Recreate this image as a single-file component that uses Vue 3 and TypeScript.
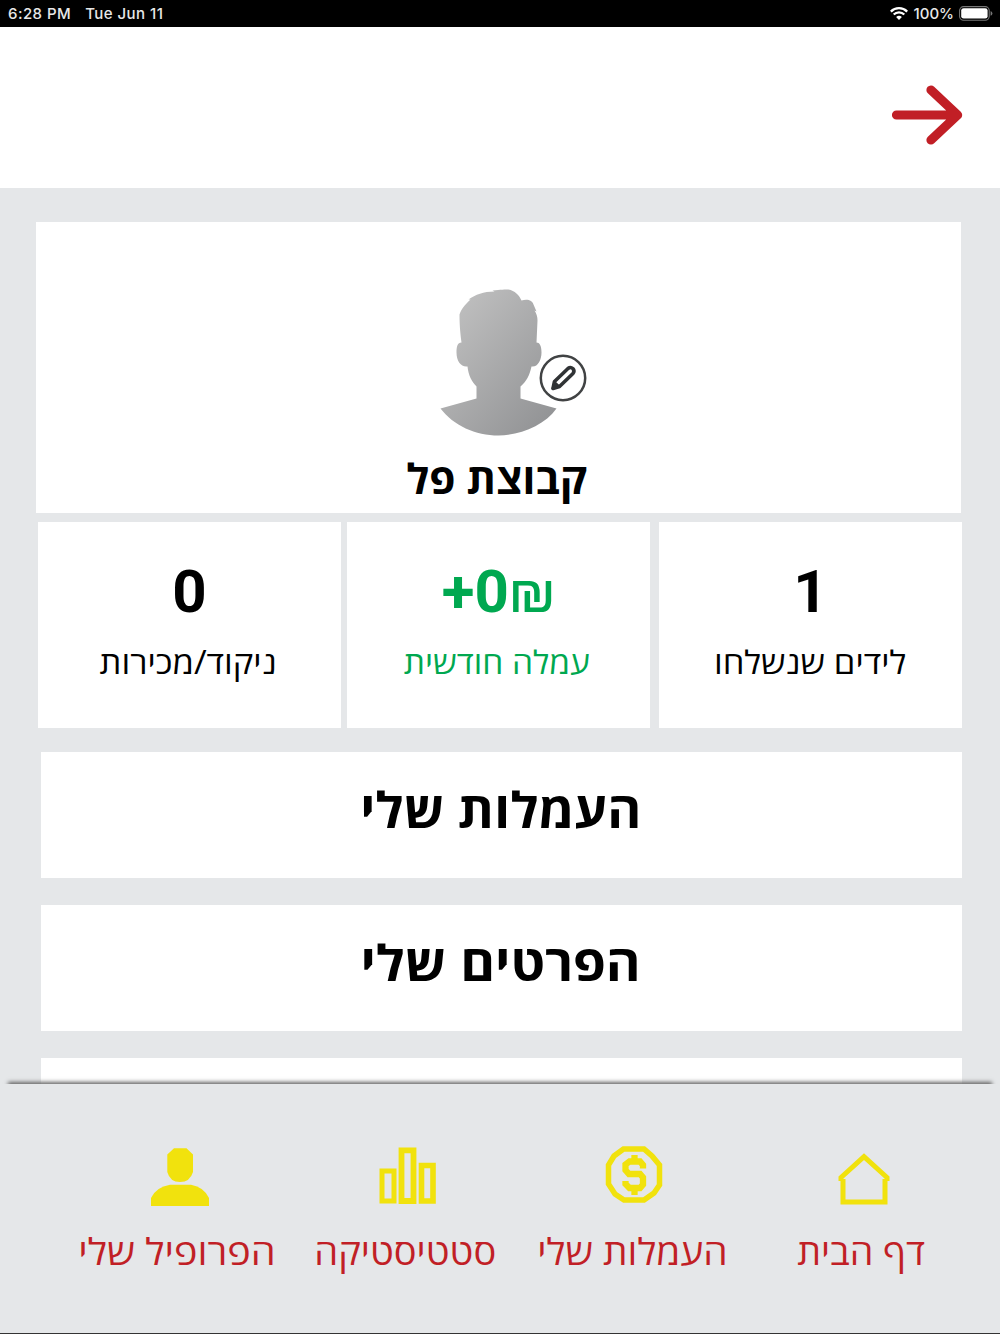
<script setup lang="ts">
interface Stat {
  value: string
  label: string
  kind: string
  stretch: number
}

interface Tab {
  icon: 'user' | 'chart' | 'coin' | 'home'
  label: string
  stretch: number
}

const stats: Stat[] = [
  { value: '0', label: 'ניקוד/מכירות', kind: 'points', stretch: 1.08 },
  { value: '+0', label: 'עמלה חודשית', kind: 'commission', stretch: 1.048 },
  { value: '1', label: 'לידים שנשלחו', kind: 'leads', stretch: 1.08 },
]

const rows: { id: string; label: string; stretch: number }[] = [
  { id: 'fees', label: 'העמלות שלי', stretch: 1.05 },
  { id: 'details', label: 'הפרטים שלי', stretch: 1.073 },
]

const tabs: Tab[] = [
  { icon: 'user', label: 'הפרופיל שלי', stretch: 1.086 },
  { icon: 'chart', label: 'סטטיסטיקה', stretch: 1.043 },
  { icon: 'coin', label: 'העמלות שלי', stretch: 1.064 },
  { icon: 'home', label: 'דף הבית', stretch: 1.03 },
]

const widen = (factor: number) => ({ transform: `scaleX(${factor})` })
</script>

<template>
  <div class="screen">
    <div class="status">
      <span class="time">6:28 PM</span>
      <span class="date">Tue Jun 11</span>
      <svg class="wifi" width="18" height="13" viewBox="0 0 18 13">
        <g fill="none" stroke="#fff" stroke-width="2.3">
          <path d="M0.8 4.6A11.6 11.6 0 0 1 17.2 4.6" />
          <path d="M3.7 7.5A7.5 7.5 0 0 1 14.3 7.5" />
        </g>
        <path d="M9 13L6.1 10.1A4.1 4.1 0 0 1 11.9 10.1Z" fill="#fff" />
      </svg>
      <span class="percent">100%</span>
      <svg class="battery" width="34" height="15" viewBox="0 0 34 15">
        <rect x="0.6" y="0.6" width="29.6" height="13.6" rx="4" fill="none" stroke="#777" stroke-width="1.1" />
        <rect x="2.2" y="2.2" width="26.4" height="10.4" rx="2.4" fill="#fff" />
        <path d="M31.6 5Q33.4 5.8 33.4 7.4Q33.4 9 31.6 9.8Z" fill="#777" />
      </svg>
    </div>

    <header class="header">
      <svg class="arrow" width="72" height="62" viewBox="0 0 72 62">
        <path d="M5.5 31H66M40 6L66.600 31L40 56" fill="none" stroke="#c11f26" stroke-width="9.2" stroke-linecap="round" stroke-linejoin="round" />
      </svg>
    </header>

    <main class="content">
      <section class="profile">
        <div class="portrait">
          <svg width="118" height="148" viewBox="0 0 118 148">
            <defs>
              <linearGradient id="skin" x1="0" y1="0.1" x2="0.85" y2="1">
                <stop offset="0" stop-color="#c2c2c2" />
                <stop offset="1" stop-color="#929395" />
              </linearGradient>
            </defs>
            <path
              fill="url(#skin)"
              d="M20 32C22 26 25 23 31 17L29 17C36 12 44 9 55 9L53 8C61 7 66 7 69 7C75 8 80 13 82 18C88 16 93 18 94 22C95 24 96 27 97 29L95 28C97 31 98 34 98 38L97 60C100 60 102 63 102 70C102 78 98 85 92 84C90 93 87 99 81 104V116L117 126C105 143 80 153 59 153C36 153 14 143 1 126L37 116V104C32 99 29 93 28 84C22 85 17 79 17 70C17 64 18 60 22 60C21 52 20 44 20 32Z"
              transform="translate(-0.500 -6.500)"
            />
          </svg>
          <svg class="edit" width="48" height="48" viewBox="0 0 48 48">
            <circle cx="24" cy="24" r="22.2" fill="#fff" stroke="#414344" stroke-width="2.5" />
            <g fill="none" stroke="#303335" stroke-linejoin="round">
              <path d="M15.500 27.500L29 14.500Q31.500 12.500 33.800 14.500Q36 17 34 19.500L20.500 32.500L14 34.500Z" stroke-width="3.6" />
              <path d="M13.500 34.500L15.500 28L20.500 32.500Z" fill="#303335" stroke-width="2" />
            </g>
          </svg>
        </div>
        <h1 class="name"><span>קבוצת פל</span></h1>
      </section>

      <section class="stats">
        <div v-for="s in stats" :key="s.kind" class="stat" :class="s.kind">
          <div class="value"><span>{{ s.value }}</span><span v-if="s.kind === 'commission'" class="shekel">₪</span></div>
          <div class="label"><span class="wide" :style="widen(s.stretch)">{{ s.label }}</span></div>
        </div>
      </section>

      <nav class="rows">
        <div v-for="r in rows" :key="r.id" class="row"><span class="wide" :style="widen(r.stretch)">{{ r.label }}</span></div>
        <div class="row"></div>
      </nav>
    </main>

    <footer class="tabs">
      <div v-for="t in tabs" :key="t.icon" class="tab" :class="t.icon">
        <svg width="60" height="60" viewBox="0 0 60 60">
          <g v-if="t.icon === 'user'" fill="#f1e20d">
            <path d="M24 2.300H36.500L43 8.500V26Q40 36 30 36Q20 36 17.300 26V8.500Z" />
            <path d="M1 60V52Q6 41 20 38.700H41Q54 41 59 52V60Z" />
          </g>
          <g v-else-if="t.icon === 'chart'" fill="none" stroke="#f1e20d" stroke-width="5">
            <path d="M4 25H16V55H4Z" />
            <path d="M23.500 4.300H35.500V55H23.500Z" stroke-width="5.8" />
            <path d="M43.500 19.500H55V55H43.500Z" stroke-width="5.600" />
          </g>
          <g v-else-if="t.icon === 'coin'" fill="none" stroke="#f1e20d">
            <path d="M19.500 3H40L48 10L55.500 19V39L50 47L40 54H20L11 48L4.500 38V19L10 10Z" stroke-width="5.500" />
            <path d="M39 22.500V19L36 15.500H25.500L21.500 18.500V24L25 28H36L39 31.500V38.500L36 42H25.500L21.500 38V35M30.500 9V16M30.500 42V49" stroke-width="6.300" />
          </g>
          <path v-else d="M7 35V31.500L30 10.700L53 31.500V35M9 33V56H51V33" fill="none" stroke="#f1e20d" stroke-width="5" />
        </svg>
        <div class="caption"><span class="wide" :style="widen(t.stretch)">{{ t.label }}</span></div>
      </div>
    </footer>
  </div>
</template>

<style>
body {
  margin: 0;
  background: #e5e7e9;
}
</style>

<style scoped>
.screen {
  width: 1000px;
  height: 1334px;
  display: flex;
  flex-direction: column;
  overflow: hidden;
  box-sizing: border-box;
  border-bottom: 1px solid #333;
  background: #e5e7e9;
  font-family: 'Open Sans', 'Noto Sans', sans-serif;
  color: #000;
}

.wide {
  display: inline-block;
}

.status {
  height: 26.5px;
  flex: none;
  display: flex;
  align-items: center;
  box-sizing: border-box;
  padding: 1px 7px 0 8px;
  background: #000;
  color: #e8e8e8;
  font: 500 15px/26px Inter, sans-serif;
  white-space: nowrap;
}

.time,
.date {
  letter-spacing: 0.45px;
}

.date {
  margin-left: 14px;
}

.wifi {
  margin-left: auto;
}

.percent {
  margin: 0 5px 0 6px;
}

.header {
  height: 161px;
  flex: none;
  display: flex;
  justify-content: flex-end;
  align-items: flex-start;
  box-sizing: border-box;
  padding: 57.5px 37px 0 0;
  background: #fff;
}

.content {
  flex: 1;
  min-height: 0;
  overflow: hidden;
  padding: 34.500px 38px 0 36px;
}

.profile {
  width: 925px;
  height: 290.5px;
  display: flex;
  flex-direction: column;
  align-items: center;
  box-sizing: border-box;
  padding-top: 67px;
  background: #fff;
}

.portrait {
  position: relative;
  width: 118px;
  height: 148px;
}

.edit {
  position: absolute;
  left: 99px;
  top: 65px;
}

.name {
  margin: 16px 3px 0 0;
  font-size: 41.500px;
  line-height: 50px;
  font-weight: 700;
  direction: rtl;
  white-space: nowrap;
  transform: scaleX(1.02);
}

.stats {
  display: flex;
  margin: 9px 0 0 2px;
}

.stat {
  width: 303px;
  height: 206.5px;
  flex: none;
  background: #fff;
  text-align: center;
  white-space: nowrap;
}

.commission {
  margin: 0 9px 0 6px;
  color: #00a850;
}

.value {
  padding-top: 35px;
  font: 700 60px/70px Roboto, sans-serif;
}

.shekel {
  font-weight: 400;
}

.label {
  margin-top: 10px;
  font-size: 32px;
  line-height: 50px;
  direction: rtl;
}

.points .label,
.commission .label {
  padding-right: 3px;
}

.rows {
  width: 921px;
  margin: 23.500px 0 0 5px;
  display: flex;
  flex-direction: column;
  gap: 26.500px;
}

.row {
  height: 126.5px;
  flex: none;
  box-sizing: border-box;
  padding-right: 2px;
  background: #fff;
  text-align: center;
  direction: rtl;
  font-size: 49.500px;
  font-weight: 700;
  line-height: 115px;
}

.tabs {
  position: relative;
  height: 249px;
  flex: none;
  display: flex;
  box-sizing: border-box;
  padding: 62px 20px 0 66px;
  background: #e5e7e9;
  box-shadow: 0 -10px 4px -8px #666;
}

.tab {
  width: 228px;
  flex: none;
  display: flex;
  flex-direction: column;
  align-items: center;
}

.tab svg {
  flex: none;
}

.user .caption {
  margin-right: 6px;
}

.chart .caption {
  margin-right: 5px;
}

.coin {
  margin: 0 2px 0 -2px;
}

.coin .caption {
  margin-right: 4px;
}

.home .caption {
  margin-right: 6px;
}

.caption {
  margin-top: 20px;
  font-size: 36.500px;
  line-height: 50px;
  color: #c11f26;
  direction: rtl;
  white-space: nowrap;
}
</style>
